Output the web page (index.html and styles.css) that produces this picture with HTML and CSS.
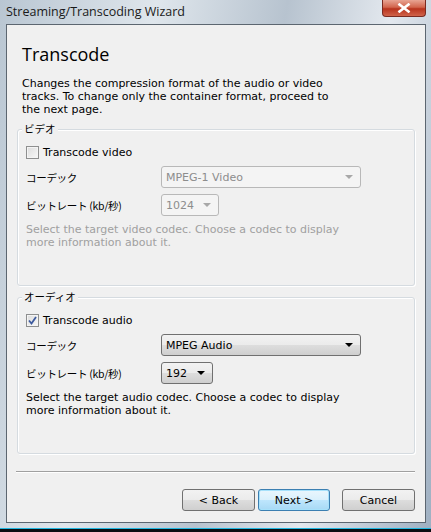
FILE: index.html
```html
<html>
<head>
    <title>Streaming/Transcoding Wizard</title>
    <link rel="stylesheet" href="styles.css">
</head>
<body>
<div class="window">
    <div class="titlebar">
        <span class="title">Streaming/Transcoding Wizard</span>
        <div class="close">
            <svg width="14" height="10" viewBox="0 0 14 10">
                <path d="M2.5 1.5 L11.5 8.5 M11.5 1.5 L2.5 8.5" stroke="#fff" stroke-width="2.6" stroke-linecap="square"/>
            </svg>
        </div>
    </div>
    <div class="client">
        <h1>Transcode</h1>
        <p class="desc">Changes the compression format of the audio or video tracks. To change only the container format, proceed to the next page.</p>

        <div class="group video">
            <div class="legend">ビデオ</div>
            <div class="check"><span class="box"></span>Transcode video</div>
            <div class="row">
                <span class="label">コーデック</span>
                <div class="combo wide disabled">MPEG-1 Video<span class="arrow"></span></div>
            </div>
            <div class="row">
                <span class="label">ビットレート (kb/秒)</span>
                <div class="combo narrow disabled">1024<span class="arrow"></span></div>
            </div>
            <p class="hint muted">Select the target video codec. Choose a codec to display more information about it.</p>
        </div>

        <div class="group audio">
            <div class="legend">オーディオ</div>
            <div class="check"><span class="box checked">
                <svg width="9" height="9" viewBox="0 0 9 9"><path d="M1 4.5 L3.5 7.5 L8 1" fill="none" stroke="#3d5a9e" stroke-width="1.8"/></svg>
            </span>Transcode audio</div>
            <div class="row">
                <span class="label">コーデック</span>
                <div class="combo wide">MPEG Audio<span class="arrow"></span></div>
            </div>
            <div class="row">
                <span class="label">ビットレート (kb/秒)</span>
                <div class="combo small">192<span class="arrow"></span></div>
            </div>
            <p class="hint">Select the target audio codec. Choose a codec to display more information about it.</p>
        </div>

        <div class="separator"></div>

        <div class="buttons">
            <button>&lt; Back</button>
            <button class="default">Next &gt;</button>
            <button class="cancel">Cancel</button>
        </div>
    </div>
</div>
</body>
</html>
```

FILE: styles.css
```css
body {
    margin: 0px;
    background-color: #0c0e12;
    font-family: "DejaVu Sans", "Noto Sans CJK JP", sans-serif;
    overflow: hidden;
}

.window {
    height: 528px;
    border-bottom: 1px solid #1fb6e0;
    background: linear-gradient(100deg, #b9c6d2 0%, #dfe6ec 30%, #b7c3cf 55%, #e3e8ee 75%, #9fb0c2 100%);
}

.titlebar {
    height: 24px;
    display: flex;
    align-items: flex-start;
    justify-content: space-between;
}

.title {
    font-family: "Open Sans", "DejaVu Sans", sans-serif;
    font-size: 12.5px;
    color: #1a1a1a;
    padding-left: 6px;
    padding-top: 3px;
}

.close {
    width: 42px;
    height: 16px;
    margin-right: 5px;
    border: 1px solid #7a2a20;
    border-top: none;
    border-radius: 0 0 4px 4px;
    background: linear-gradient(#e8a493 0%, #d2654d 45%, #b8331d 55%, #d0634a 100%);
    display: flex;
    align-items: center;
    justify-content: center;
}

.client {
    margin: 0 5px 0 6px;
    height: 499px;
    box-sizing: border-box;
    border: 1px solid #5c6670;
    background-color: #f0f0f0;
    display: flex;
    flex-direction: column;
}

h1 {
    margin: 18px 0 0 15px;
    font-family: "Open Sans", "DejaVu Sans", sans-serif;
    font-weight: normal;
    font-size: 18px;
    line-height: 22px;
    color: #000;
}

.desc {
    margin: 12px 0 0 15px;
    width: 322px;
    font-size: 11px;
    line-height: 13px;
    color: #000;
}

.group {
    margin: 13px 10px 0 10px;
    height: 157px;
    box-sizing: border-box;
    border: 1px solid #d5dbe0;
    border-radius: 3px;
    box-shadow: inset 1px 1px 0 #fff, 1px 1px 0 #fff;
    position: relative;
    padding: 15px 8px 0 8px;
}

.audio {
    margin-top: 11px;
}

.legend {
    position: absolute;
    top: -8px;
    left: 4px;
    padding: 0 2px;
    background-color: #f0f0f0;
    font-family: "Noto Sans CJK JP", sans-serif;
    font-size: 10.5px;
    line-height: 14px;
}

.check {
    display: flex;
    align-items: center;
    gap: 4px;
    font-size: 11px;
    height: 14px;
}

.box {
    width: 11px;
    height: 11px;
    border: 1px solid #8e8f8f;
    background: linear-gradient(135deg, #dcdcdc, #f8f8f8);
    box-shadow: inset 0 0 0 1px #f4f4f4;
    display: flex;
    align-items: center;
    justify-content: center;
}

.row {
    display: flex;
    align-items: center;
    margin-top: 7px;
    height: 22px;
}

.row + .row {
    margin-top: 6px;
}

.label {
    width: 135px;
    font-family: "Noto Sans CJK JP", sans-serif;
    font-size: 10.5px;
    letter-spacing: -0.3px;
}

.combo {
    height: 20px;
    border: 1px solid #707070;
    border-radius: 3px;
    background: linear-gradient(#f2f2f2 0%, #ebebeb 50%, #dddddd 51%, #cfcfcf 100%);
    font-size: 11px;
    color: #000;
    display: flex;
    align-items: center;
    justify-content: space-between;
    padding: 0 7px 0 4px;
    box-sizing: content-box;
}

.combo.disabled {
    border-color: #b8b8b8;
    background: #f4f4f4;
    color: #8d8d8d;
}

.wide {
    width: 187px;
}

.narrow {
    width: 45px;
}

.small {
    width: 39px;
}

.arrow {
    width: 0;
    height: 0;
    border-left: 4px solid transparent;
    border-right: 4px solid transparent;
    border-top: 4px solid #000;
}

.disabled .arrow {
    border-top-color: #a8a8a8;
}

.hint {
    margin: 7px 0 0 0;
    width: 325px;
    font-size: 11px;
    line-height: 13px;
    color: #000;
}

.hint.muted {
    color: #a0a0a0;
}

.separator {
    margin: 17px 10px 0 9px;
    border-top: 1px solid #a0a0a0;
    border-bottom: 1px solid #fff;
}

.buttons {
    display: flex;
    justify-content: flex-end;
    margin: 16px 10px 0 0;
    gap: 3px;
}

button {
    width: 73px;
    height: 22px;
    border: 1px solid #707070;
    border-radius: 3px;
    background: linear-gradient(#f2f2f2 0%, #ebebeb 50%, #dddddd 51%, #cfcfcf 100%);
    font-family: "DejaVu Sans", sans-serif;
    font-size: 11px;
    color: #000;
    padding: 0;
}

button.default {
    width: 72px;
    border-color: #3c7fb1;
    background: linear-gradient(#eaf6fd 0%, #d9f0fc 50%, #bee6fd 51%, #a7d9f5 100%);
    box-shadow: inset 0 0 0 1px #a6e1fb;
}

button.cancel {
    margin-left: 9px;
}
```
